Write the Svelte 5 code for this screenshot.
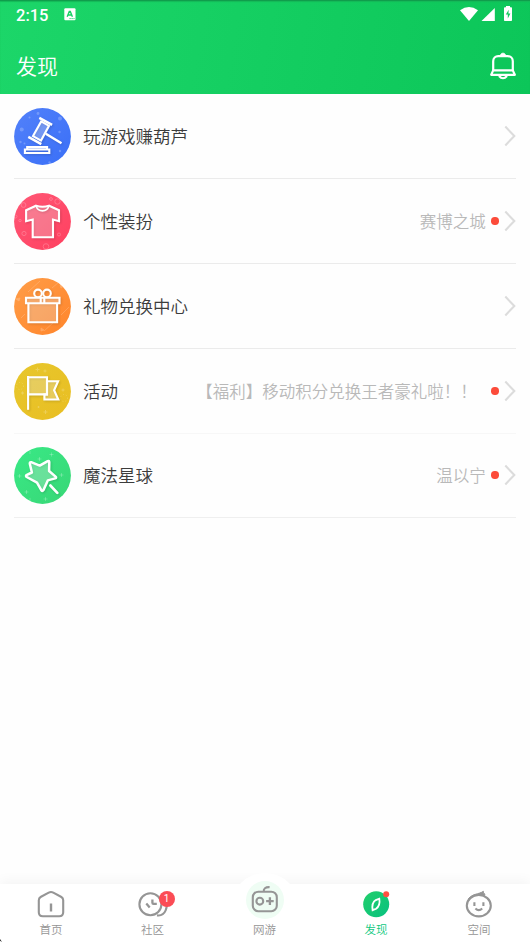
<script>
	const rows = [
		{ icon: 'gavel', title: '玩游戏赚葫芦' },
		{ icon: 'shirt', title: '个性装扮', note: '赛博之城' },
		{ icon: 'gift', title: '礼物兑换中心' },
		{ icon: 'flag', title: '活动', note: '【福利】移动积分兑换王者豪礼啦！！' },
		{ icon: 'star', title: '魔法星球', note: '温以宁' }
	];

	const tabs = [
		{ icon: 'home', label: '首页' },
		{ icon: 'group', label: '社区', badge: 1 },
		{ icon: 'game', label: '网游' },
		{ icon: 'discover', label: '发现', active: true },
		{ icon: 'space', label: '空间' }
	];
</script>

<div class="screen">
	<header>
		<div class="status">
			<span class="time">2:15</span>
			<svg class="keyboard" width="12" height="13" viewBox="0 0 12 13">
				<rect x="0.3" y="0.3" width="11.2" height="12" rx="1" fill="#fff" />
				<path d="M3.2 8.7 5.3 3.4h1L8.4 8.7M4 7h3.6" fill="none" stroke="#18d164" stroke-width="1.4" />
				<path d="M5.5 10.6h5" stroke="#18d164" stroke-dasharray="1.2 .8" />
			</svg>
			<svg class="signals" width="54" height="16" viewBox="0 0 54 16" fill="#fff">
				<path d="M0 4.2Q9-2.2 18 4.2L9 15z" />
				<path d="M34.8 2v13H21.5z" />
				<path d="M46 1.2V0h4v1.2h1.2q.8 0 .8.8v12.2q0 .8-.8.8h-6.4q-.8 0-.8-.8V2q0-.8.8-.8z" />
				<path d="m48.7 3.8-2.9 4.8h2v3.8l2.6-5h-2z" fill="#11c95c" />
			</svg>
		</div>
		<div class="title-bar">
			<h1>发现</h1>
			<svg width="28" height="28" viewBox="0 0 28 28" fill="none" stroke="#fff" stroke-width="2.2">
				<path d="M4.2 18.5V9.2c0-3 2.2-5 5-5h9.6c2.8 0 5 2 5 5v9.3" />
				<path d="M4.2 18.4h19.6l2 4.4H2.2z" stroke-linejoin="round" />
				<path d="M11.4 3.6C11.8.4 16.2.4 16.6 3.6z" fill="#fff" stroke-width="1" />
				<path d="M10 24q4 4.5 8 0" />
			</svg>
		</div>
	</header>

	<main>
		{#each rows as row}
			<div class="row {row.icon}">
				<svg class="icon" viewBox="0 0 57 57" fill="none" stroke="#fff" stroke-width="2.1">
					<defs>
						<linearGradient id="{row.icon}-bg" x1="0" y1="0" x2="1" y2="1">
							<stop class="from" />
							<stop class="to" offset="1" />
						</linearGradient>
					</defs>
					<circle cx="28.5" cy="28.5" r="28.4" fill="url(#{row.icon}-bg)" stroke="none" />
					{#if row.icon === 'gavel'}
						<g class="spots" fill="#fff" stroke="none">
							<circle cx="7.7" cy="21.5" r="2" /><circle cx="46" cy="10.5" r="2" /><circle cx="24" cy="5.5" r="1.4" />
							<circle cx="45.5" cy="24" r="1.2" /><circle cx="6.5" cy="34" r="1.2" /><circle cx="10.5" cy="35.5" r="1" />
							<circle cx="46" cy="43" r="1.2" /><circle cx="35.5" cy="54.5" r="1.2" /><circle cx="15.5" cy="9.5" r="1" />
						</g>
						<g class="lines">
							<path class="tint" d="m27.2 13.4 7.8 4.4-8 14.8-8-4.5z" />
							<path d="m25.3 9.8 12.8 7M14.3 28.8l13 7.3M31.8 25.7l15.7 9.5" stroke-width="2.5" />
							<path d="M10.9 45h24.4v-3.5h-2.2v-2.4H13.2v2.4h-2.3zM13 41.5h20.5" />
						</g>
					{:else if row.icon === 'shirt'}
						<g class="spots" stroke-width="1">
							<circle cx="9.5" cy="12" r="2.4" /><circle cx="43.5" cy="8.5" r="2.7" /><circle cx="37" cy="6" r="1.4" />
							<circle cx="10" cy="40.5" r="2.1" /><circle cx="32" cy="53.5" r="2.8" /><circle cx="45" cy="41.5" r="1.5" />
							<circle cx="1.5" cy="23.5" r="1.5" /><circle cx="6" cy="27.5" r="1.2" />
						</g>
						<path class="lines tint" d="M12.1 17.2 22 12.7q6.5 2.2 13 0l10 4.5v11l-6-1.6v17.6H18.7V26.6l-6.6 1.6z" />
						<path class="lines" d="M22.2 13c1.8 6.5 10.8 6.5 12.6 0" stroke-width="1.6" />
					{:else if row.icon === 'gift'}
						<g class="spots" stroke-width=".8">
							<path d="m14 14 12-11M38 10l7-6M47 37l8-8M30 53l10-9M7 40l4-4" />
							<path d="m2 21 4-1-1 3zM46 7l4 1-3 2zM27 50l3 2-3 1z" fill="#fff" />
						</g>
						<g class="lines">
							<path class="tint" d="M14.4 25.3h28.7v19H14.4zM12 19.8h33.5v5.5H12z" />
							<circle cx="24" cy="15.4" r="3.8" /><circle cx="33" cy="15.4" r="3.8" />
							<path d="M26.7 20v5.3M30.3 20v5.3" />
						</g>
					{:else if row.icon === 'flag'}
						<g class="spots" stroke-width="1">
							<path d="M23.5 4.5v4m-2-2h4M31 6.5v3m-1.5-1.5h3M31.5 47v4m-2-2h4M24.5 43v2m-1-1h2M49 25.5v3M47.5 27h3M8.5 28.5v3M7 30h3" />
							<circle cx="6" cy="23" r="3.5" stroke-dasharray="1 2" /><circle cx="50" cy="35" r="3.5" stroke-dasharray="1 2" />
						</g>
						<g class="lines">
							<path class="tint" d="M33 18.3h11.1l-4 9 4.2 9.2H30.4v-5H33z" />
							<path class="tint" d="M14.1 14.2H33v17.2H14.1z" />
							<path d="M14.1 13v33.8" />
						</g>
					{:else}
						<g class="spots" stroke-width="1">
							<path d="M25.5 10v4m-2-2h4M37.5 5.5v4m-2-2h4M47.5 26v4m-2-2h4M5.5 27v4m-2-2h4M12.5 43v4m-2-2h4M31.5 50v4m-2-2h4M16 4v3M16 51v3" />
						</g>
						<g class="lines" stroke-linejoin="round" stroke-linecap="round">
							<path class="tint" stroke-width="2.5" d="M17.2 15.2 25.7 18.6l8-4.5q1.6-.6 1.6 1.2l-.2 8.7 6.5 5.6q1.2 1.2-.4 1.8L33.8 33.4l-4.4 9.8q-1 1.6-2.1 0l-4.3-7.6-10.3-5.6q-1.5-1.2.2-2.1l5-2.4-2.1-8.8q-.1-1.8 1.4-1.5z" />
							<path d="m36.4 38.5 6.9 7.4" stroke-width="2.6" />
						</g>
					{/if}
				</svg>
				<span class="name">{row.title}</span>
				{#if row.note}
					<span class="note">{row.note}</span>
					<i class="dot"></i>
				{/if}
				<svg class="chevron" width="12" height="22" viewBox="0 0 12 22">
					<path d="m1.3 1.6 9 9.4-9 9.4" fill="none" stroke="#dcdcdc" stroke-width="2.1" />
				</svg>
			</div>
		{/each}
	</main>

	<nav>
		{#each tabs as tab}
			<div class="tab {tab.icon}" class:active={tab.active}>
				<svg width="40" height="38" viewBox="0 0 40 38" fill="none" stroke="#959595" stroke-width="2.1">
					{#if tab.icon === 'home'}
						<path d="M17.7 7.6 9.6 12q-1.8 1-1.8 3.2v12q0 4 4 4h16.4q4 0 4-4v-12q0-2.2-1.8-3.2l-8.1-4.4q-2.3-1.2-4.6 0z" />
						<path d="M20 18.5v8" stroke-width="2.4" />
					{:else if tab.icon === 'group'}
						<path d="M24 30.4c8.2 1.2 12.4-9 7.4-16.4" />
						<circle cx="17.4" cy="19.2" r="11" />
						<path d="m13.3 18.6 3.4 3.8M19.4 14.6v3.2q0 1.1 1.1 1.1h3.3" stroke-width="2.3" />
					{:else if tab.icon === 'game'}
						<rect x="7.8" y="11.7" width="24" height="19.5" rx="5.5" />
						<path d="M18.8 11.7c-.5-3 1.6-4.8 5.8-4.6" />
						<circle cx="14.8" cy="21.2" r="3.4" />
						<path d="M24.9 17.3v7.6M21.1 21.1h7.6" stroke-width="2.3" />
					{:else if tab.icon === 'discover'}
						<defs>
							<linearGradient id="discover-bg" x1="0" y1="0" x2="1" y2="1">
								<stop stop-color="#22cf6b" /><stop offset="1" stop-color="#08c180" />
							</linearGradient>
						</defs>
						<circle cx="20.2" cy="19.3" r="13" fill="url(#discover-bg)" stroke="none" />
						<path d="M23.3 13.7q1.2 7-3.2 10.1l-3.5 1.4q-1.2-7.4 3.2-10.1z" stroke="#fff" stroke-width="1.8" />
						<circle cx="30.2" cy="9.3" r="3" fill="#ff4f41" stroke="none" />
					{:else}
						<path d="M9.5 13.8C13.5 8.4 19.5 9.6 24.4 6.3q-.8 1.8 1.6 2.9l-.8 1.6q-8-2.4-15.7 3z" fill="#959595" stroke-width="1" />
						<ellipse cx="19.8" cy="20.7" rx="12" ry="10.7" />
						<path d="M15.4 17.3v3.6M24.4 17.3v3.6" />
						<path d="M16.4 23.6q3.4 3.2 6.8 0" />
					{/if}
				</svg>
				{#if tab.badge}<b>{tab.badge}</b>{/if}
				<span>{tab.label}</span>
			</div>
		{/each}
		<i class="corner"></i>
	</nav>
</div>

<style>
	:global(body) {
		margin: 0;
	}
	.screen {
		width: 530px;
		height: 942px;
		display: flex;
		flex-direction: column;
		overflow: hidden;
		background: #fefefe;
		font-family: 'Noto Sans CJK SC', sans-serif;
		font-weight: 350;
	}
	svg {
		display: block;
		flex: none;
	}
	header {
		height: 94px;
		flex: none;
		box-sizing: border-box;
		color: #fff;
		background: linear-gradient(100deg, #1cd669, #0cc659);
		box-shadow: inset 0 1px #109d4c, inset 0 2px 1px #14b958;
	}
	.status {
		height: 30px;
		padding: 0 16px;
		display: flex;
		align-items: center;
	}
	.time {
		width: 48px;
		margin-top: 1px;
		font: 500 16.5px/29px Roboto, sans-serif;
	}
	.keyboard {
		margin-top: -2px;
	}
	.signals {
		margin: -3px 0 0 auto;
	}
	.title-bar {
		height: 72px;
		padding: 0 13px 0 16px;
		display: flex;
		align-items: center;
		justify-content: space-between;
	}
	h1 {
		margin: -2px 0 0;
		font-size: 21px;
		font-weight: 350;
		line-height: 30px;
	}
	main {
		flex: 1;
		padding: 0 14px;
	}
	.row {
		height: 85px;
		box-sizing: border-box;
		padding-top: 1px;
		display: flex;
		align-items: center;
		border-bottom: 1px solid #ebebeb;
	}
	.row:last-child {
		height: 84px;
		padding-top: 0;
		border-color: #efefef;
	}
	.row.flag {
		border-color: #f7f7f7;
	}
	.icon {
		width: 57px;
		height: 57px;
	}
	.gavel .from { stop-color: #5281fa; }
	.gavel .to { stop-color: #3a6ff7; }
	.shirt .from { stop-color: #ff5776; }
	.shirt .to { stop-color: #ff405f; }
	.gift .from { stop-color: #ff9d48; }
	.gift .to { stop-color: #ff852b; }
	.flag .from { stop-color: #e7c72d; }
	.flag .to { stop-color: #e9be22; }
	.star .from { stop-color: #39e986; }
	.star .to { stop-color: #38d776; }
	.spots {
		opacity: 0.22;
	}
	.lines {
		filter: drop-shadow(1px 1px 1px rgba(0, 0, 0, 0.15));
	}
	.tint {
		fill: rgba(255, 255, 255, 0.25);
	}
	.name {
		margin: -2px 0 0 12px;
		font-size: 17.5px;
		color: #3c3c3c;
	}
	.note {
		margin: -2px 0 0 auto;
		font-size: 16.5px;
		color: #b9b9b9;
	}
	.flag .note {
		padding-right: 9px;
	}
	.dot {
		width: 7.4px;
		height: 7.4px;
		margin: -1px 5.3px 0 5.7px;
		border-radius: 50%;
		background: #fc4b3a;
	}
	.chevron {
		margin: -1px 0 0 auto;
	}
	.dot + .chevron {
		margin-left: 0;
	}
	nav {
		position: relative;
		height: 58px;
		flex: none;
		display: grid;
		grid-template-columns: 102px 101px 123px 100px 104px;
		background: #fff;
		box-shadow: 0 -3px 12px rgba(0, 0, 0, 0.045);
	}
	.tab {
		position: relative;
		display: flex;
		flex-direction: column;
		align-items: center;
		color: #959595;
		font-size: 11.5px;
		line-height: 16px;
	}
	.tab svg {
		position: relative;
		margin: 1px 0 -2px;
	}
	.tab.active {
		color: #0dc87d;
	}
	.game::before,
	.game::after {
		content: '';
		position: absolute;
		border-radius: 50%;
	}
	.game::before {
		top: -11px;
		left: 28px;
		width: 68px;
		height: 68px;
		background: #fff;
	}
	.game::after {
		top: -3px;
		left: 43px;
		width: 38px;
		height: 38px;
		background: #effdf4;
	}
	.game svg {
		z-index: 1;
		margin: -4px 0 3px;
	}
	.game span {
		z-index: 1;
	}
	.space {
		left: 1px;
	}
	b {
		position: absolute;
		top: 7px;
		left: 56.5px;
		width: 16px;
		height: 16px;
		border-radius: 50%;
		background: #fb4c55;
		color: #fff;
		font: 400 10px/16px Roboto, sans-serif;
		text-align: center;
	}
	.corner {
		position: absolute;
		left: 0;
		bottom: 0;
		width: 2px;
		height: 3px;
		background: #222;
		clip-path: polygon(0 0, 100% 100%, 0 60%);
	}
</style>
